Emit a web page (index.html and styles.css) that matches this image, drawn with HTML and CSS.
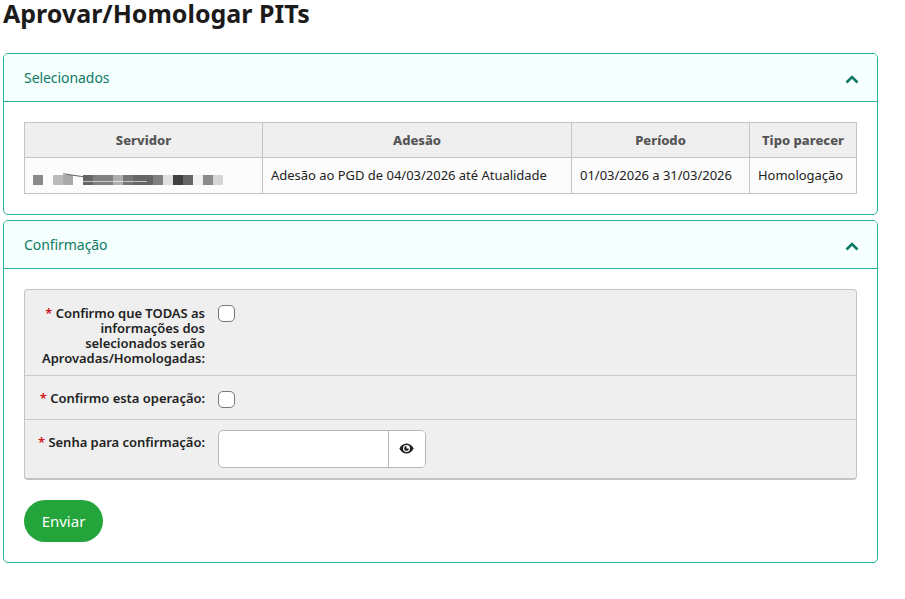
FILE: index.html
```html
<!DOCTYPE html>
<html lang="pt-BR">
<head>
    <meta charset="UTF-8">
    <title>Aprovar/Homologar PITs</title>
    <link rel="stylesheet" href="styles.css">
</head>
<body>
    <h1 class="page-title">Aprovar/Homologar PITs</h1>

    <section class="panel panel-selected">
        <div class="panel-header">
            <h2>Selecionados</h2>
            <svg class="chevron" viewBox="0 0 14 9" width="14" height="9"><path d="M1.5 7.5 7 2l5.5 5.5" fill="none" stroke="currentColor" stroke-width="2.6"/></svg>
        </div>
        <div class="panel-body">
            <table class="data-table">
                <colgroup>
                    <col class="col-servidor">
                    <col class="col-adesao">
                    <col class="col-periodo">
                    <col class="col-tipo">
                </colgroup>
                <thead>
                    <tr>
                        <th>Servidor</th>
                        <th>Adesão</th>
                        <th>Período</th>
                        <th>Tipo parecer</th>
                    </tr>
                </thead>
                <tbody>
                    <tr>
                        <td><span class="mosaic"></span></td>
                        <td>Adesão ao PGD de 04/03/2026 até Atualidade</td>
                        <td>01/03/2026 a 31/03/2026</td>
                        <td>Homologação</td>
                    </tr>
                </tbody>
            </table>
        </div>
    </section>

    <section class="panel panel-confirm">
        <div class="panel-header">
            <h2>Confirmação</h2>
            <svg class="chevron" viewBox="0 0 14 9" width="14" height="9"><path d="M1.5 7.5 7 2l5.5 5.5" fill="none" stroke="currentColor" stroke-width="2.6"/></svg>
        </div>
        <div class="panel-body">
            <form class="confirm-form">
                <div class="form-row row-todas">
                    <label class="form-label"><span class="required">*</span> Confirmo que TODAS as informações dos selecionados serão Aprovadas/Homologadas:</label>
                    <input type="checkbox" class="check">
                </div>
                <div class="form-row row-operacao">
                    <label class="form-label"><span class="required">*</span> Confirmo esta operação:</label>
                    <input type="checkbox" class="check">
                </div>
                <div class="form-row row-senha">
                    <label class="form-label"><span class="required">*</span> Senha para confirmação:</label>
                    <div class="input-group">
                        <input type="password" class="password-input">
                        <button type="button" class="eye-button">
                            <svg viewBox="0 0 16 12" width="15" height="11"><path fill-rule="evenodd" d="M8 .5C4.400.5 1.600 2.800.2 6c1.400 3.200 4.200 5.500 7.800 5.500s6.400-2.300 7.800-5.500C14.400 2.800 11.600.5 8 .5Zm0 1.700a3.800 3.800 0 1 1 0 7.600 3.800 3.800 0 0 1 0-7.600Z" fill="#222"/><path d="M8 3.400a2.600 2.600 0 1 0 2.600 2.600H8Z" fill="#222"/></svg>
                        </button>
                    </div>
                </div>
            </form>
            <button type="button" class="send-button">Enviar</button>
        </div>
    </section>
</body>
</html>
```

FILE: styles.css
```css
body {
    margin: 0;
    padding: 0 27px 0 3px;
    background-color: #fff;
    color: #222;
    font-family: "Noto Sans", "Open Sans", sans-serif;
    font-size: 13px;
}

.page-title {
    margin: 0 0 27px 0;
    font-size: 25px;
    line-height: 26px;
    font-weight: 700;
    color: #1b1b1b;
}

/* panels */
.panel {
    border: 1px solid #1fb39b;
    border-radius: 5px;
    overflow: hidden;
    margin-bottom: 5px;
}

.panel-header {
    display: flex;
    align-items: center;
    justify-content: space-between;
    height: 47px;
    padding: 0 18px 0 20px;
    background-color: #f5fffe;
    border-bottom: 1px solid #1fb39b;
    color: #0e7a66;
}

.panel-header h2 {
    margin: 0;
    font-size: 14px;
    font-weight: 400;
    letter-spacing: -0.06px;
}

.chevron {
    display: block;
    margin-top: 3px;
}

.panel-body {
    padding: 20px;
}

/* table */
.data-table {
    width: 832px;
    border-collapse: collapse;
    table-layout: fixed;
}

.col-servidor { width: 238px; }
.col-adesao { width: 309px; }
.col-periodo { width: 178px; }
.col-tipo { width: 107px; }

.data-table th,
.data-table td {
    border: 1px solid #c4c4c4;
    white-space: nowrap;
}

.data-table th {
    height: 34px;
    padding: 0;
    background-color: #efefef;
    color: #555;
    font-size: 13px;
    font-weight: 800;
    text-align: center;
}

.data-table td {
    height: 34px;
    padding: 0 8px 1px;
    background-color: #fcfcfc;
    color: #222;
    letter-spacing: -0.02px;
}

.mosaic {
    display: block;
    position: relative;
    width: 190px;
    height: 10px;
    margin-top: 9px;
    background-image: linear-gradient(to right,
        #8a8a8a 0 10px, #fcfcfc 10px 20px, #bbb 20px 30px, #aaa 30px 40px,
        #fcfcfc 40px 50px, #666 50px 60px, #808080 60px 80px, #aeaeae 80px 90px,
        #757575 90px 100px, #666 100px 120px, #808080 120px 130px, #e0e0e0 130px 140px,
        #404040 140px 150px, #666 150px 160px, #f0f0f0 160px 170px, #8a8a8a 170px 180px,
        #d6d6d6 180px 190px);
}

/* bits of the blurred name that show through the mosaic */
.mosaic::before {
    content: "";
    position: absolute;
    left: 30px;
    top: 0;
    width: 24px;
    height: 1px;
    background-color: #666;
    transform: rotate(8deg);
}

.mosaic::after {
    content: "";
    position: absolute;
    left: 50px;
    top: 6px;
    width: 64px;
    height: 1px;
    background-color: #fff;
    opacity: 0.6;
}

/* form */
.confirm-form {
    background-color: #efefef;
    border: 1px solid #c4c4c4;
    border-bottom-width: 2px;
    border-radius: 4px;
}

.form-row {
    display: flex;
    align-items: flex-start;
    gap: 13px;
    border-bottom: 1px solid #c9c9c9;
}

.form-row:last-child {
    border-bottom: 0;
}

.row-todas {
    height: 86px;
    padding-top: 15px;
    box-sizing: border-box;
}

.row-todas .form-label {
    padding-top: 1px;
}

.row-operacao {
    height: 44px;
    padding-top: 15px;
    box-sizing: border-box;
}

.row-senha {
    height: 58px;
    padding-top: 10px;
    box-sizing: border-box;
}

.form-label {
    flex: 0 0 170px;
    margin-left: 10px;
    font-weight: 600;
    line-height: 15px;
    letter-spacing: -0.03px;
    text-align: right;
    color: #222;
}

.row-senha .form-label {
    padding-top: 5px;
}

.required {
    color: #d0121b;
}

.check {
    appearance: none;
    width: 17px;
    height: 17px;
    margin: 0;
    background-color: #fff;
    border: 1px solid #777;
    border-radius: 5px;
}

.input-group {
    display: flex;
    width: 208px;
    height: 38px;
    box-sizing: border-box;
    background-color: #fff;
    border: 1px solid #b5b5b5;
    border-radius: 5px;
    overflow: hidden;
}

.password-input {
    flex: 1;
    min-width: 0;
    border: 0;
    padding: 0 8px;
    background: transparent;
}

.eye-button {
    display: flex;
    align-items: center;
    justify-content: center;
    width: 37px;
    padding: 0 2px 2px 0;
    background-color: #fff;
    border: 0;
    border-left: 1px solid #b5b5b5;
}

.send-button {
    display: block;
    width: 79px;
    height: 42px;
    margin: 20px 0 0 0;
    padding: 0;
    background-color: #23a53c;
    border: 0;
    border-radius: 21px;
    color: #fff;
    font-family: inherit;
    font-size: 15px;
}
```
